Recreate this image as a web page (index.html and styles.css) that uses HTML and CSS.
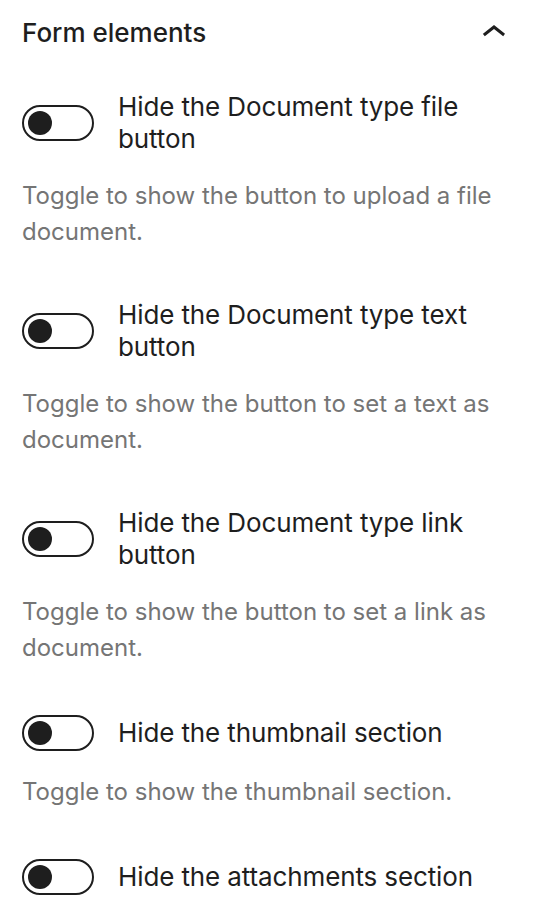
FILE: index.html
```html
<!DOCTYPE html>
<html lang="en">
<head>
<meta charset="utf-8">
<title>Form elements</title>
<link rel="stylesheet" href="styles.css">
</head>
<body>
<div class="panel">
  <div class="panel-header">
    <h2 class="panel-title">Form elements</h2>
    <svg class="chevron" width="48" height="48" viewBox="0 0 24 24" aria-hidden="true"><path d="M6.5 12.4L12 8l5.5 4.4-.9 1.2L12 10l-4.6 3.6-1-1.2z"/></svg>
  </div>
  <div class="panel-body">
    <div class="control">
      <div class="control-row">
        <span class="toggle"><span class="knob"></span></span>
        <label class="control-label">Hide the Document type file button</label>
      </div>
      <p class="help">Toggle to show the button to upload a file document.</p>
    </div>
    <div class="control">
      <div class="control-row">
        <span class="toggle"><span class="knob"></span></span>
        <label class="control-label">Hide the Document type text button</label>
      </div>
      <p class="help">Toggle to show the button to set a text as document.</p>
    </div>
    <div class="control">
      <div class="control-row">
        <span class="toggle"><span class="knob"></span></span>
        <label class="control-label">Hide the Document type link button</label>
      </div>
      <p class="help">Toggle to show the button to set a link as document.</p>
    </div>
    <div class="control">
      <div class="control-row">
        <span class="toggle"><span class="knob"></span></span>
        <label class="control-label">Hide the thumbnail section</label>
      </div>
      <p class="help">Toggle to show the thumbnail section.</p>
    </div>
    <div class="control">
      <div class="control-row">
        <span class="toggle"><span class="knob"></span></span>
        <label class="control-label">Hide the attachments section</label>
      </div>
    </div>
  </div>
</div>
</body>
</html>
```
FILE: styles.css
```css
html, body {
  margin: 0;
  padding: 0;
  background: #ffffff;
}
body {
  font-family: Inter, "Noto Sans", "Liberation Sans", sans-serif;
  color: #1e1e1e;
}
.panel {
  padding: 0 28px 0 22px;
}
.panel-header {
  height: 66px;
  display: flex;
  align-items: center;
  justify-content: space-between;
}
.panel-title {
  margin: 0;
  font-size: 26px;
  font-weight: 500;
  line-height: 32px;
}
.chevron {
  fill: #1e1e1e;
}
.panel-body {
  padding-top: 25px;
}
.control {
  margin-bottom: 49px;
}
.control-row {
  display: flex;
  align-items: center;
  gap: 24px;
}
.toggle {
  flex: none;
  box-sizing: border-box;
  width: 72px;
  height: 36px;
  border: 2px solid #1e1e1e;
  border-radius: 18px;
  display: flex;
  align-items: center;
  padding-left: 4px;
}
.knob {
  width: 24px;
  height: 24px;
  border-radius: 50%;
  background: #1e1e1e;
}
.control-label {
  font-size: 26px;
  line-height: 32px;
  letter-spacing: -0.12px;
}
.help {
  margin: 23px 0 0;
  font-size: 24px;
  line-height: 36px;
  color: #757575;
}
```
